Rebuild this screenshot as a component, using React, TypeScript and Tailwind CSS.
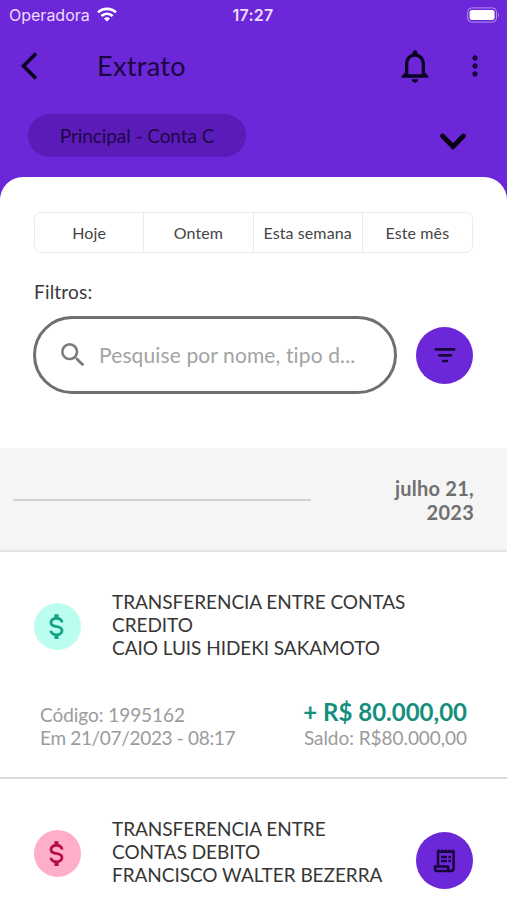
import type { ReactNode } from "react";
import clsx from "clsx";
import { MdMoreVert, MdNotificationsNone, MdSearch } from "react-icons/md";

interface Transaction {
  lines: string[];
  kind: "credit" | "debit";
  code?: string;
  date?: string;
  amount?: string;
  balance?: string;
}

const PERIODS = ["Hoje", "Ontem", "Esta semana", "Este mês"];

const TRANSACTIONS: Transaction[] = [
  {
    lines: ["TRANSFERENCIA ENTRE CONTAS", "CREDITO", "CAIO LUIS HIDEKI SAKAMOTO"],
    kind: "credit",
    code: "1995162",
    date: "21/07/2023 - 08:17",
    amount: "+ R$ 80.000,00",
    balance: "R$80.000,00",
  },
  {
    lines: ["TRANSFERENCIA ENTRE", "CONTAS DEBITO", "FRANCISCO WALTER BEZERRA"],
    kind: "debit",
  },
];

function StatusBar() {
  return (
    <div className="grid h-[29px] grid-cols-3 items-center pl-[9px] pr-[10px] font-['Inter'] text-[#eedcff]">
      <div className="flex items-center gap-[7px]">
        <span className="text-[16px] leading-none">Operadora</span>
        <svg className="h-[15px] w-5" viewBox="0 0 20 15" fill="none" stroke="white" strokeWidth="2.7">
          <path d="M1 5.4C6 .6 14 .6 19 5.4" />
          <path d="M4.4 9C7.6 6 12.4 6 15.6 9" />
          <path d="M10 14.6 6.9 11.5C8.6 9.9 11.4 9.9 13.1 11.5Z" fill="white" stroke="none" />
        </svg>
      </div>
      <span className="text-center text-[16px] font-semibold leading-none tracking-[0.3px]">17:27</span>
      <svg className="-mr-[3px] h-4 w-[33px] justify-self-end" viewBox="0 0 33 16">
        <rect x="0.7" y="0.9" width="28.8" height="14.2" rx="4" fill="none" stroke="#b292ee" strokeWidth="1" />
        <rect x="2.6" y="2.9" width="25" height="10.2" rx="2.4" fill="white" />
        <path d="M31 5.8c1.3.6 1.3 3.8 0 4.4Z" fill="#b292ee" />
      </svg>
    </div>
  );
}

function Header() {
  return (
    <header className="h-[200px] text-[#1a0640]">
      <StatusBar />
      <div className="flex h-[73px] items-center pl-[20px] pr-[16px]">
        <svg className="h-7 w-5" viewBox="0 0 20 28" fill="none" stroke="#0c0320" strokeWidth="3.6">
          <path d="M16 1.5 3.5 14 16 26.5" />
        </svg>
        <h1 className="ml-[57px] text-[27px] leading-none tracking-[0.35px]">Extrato</h1>
        <MdNotificationsNone className="ml-auto size-10 text-[#0c0320]" />
        <MdMoreVert className="ml-[24px] size-8 text-[#1b0640]" />
      </div>
      <div className="flex items-start pl-[28px] pr-[39px] pt-[12px]">
        <div className="flex h-[43px] w-[218px] items-center justify-center rounded-full bg-[#5a1bb8] pt-px text-[19px] -tracking-[0.07px] text-[#1f0747]">
          Principal - Conta C
        </div>
        <svg
          className="ml-auto mt-[17px] h-5 w-[30px]"
          viewBox="0 0 30 20"
          fill="none"
          stroke="#080213"
          strokeWidth="4.8"
          strokeLinecap="round"
        >
          <path d="m4.5 5 10.500 10.500L25.500 5" />
        </svg>
      </div>
    </header>
  );
}

function RoundButton({ className, children }: { className?: string; children: ReactNode }) {
  return (
    <button
      type="button"
      className={clsx(
        "flex size-[57px] shrink-0 items-center justify-center rounded-full bg-[#6c27d9] text-[#18053a]",
        className
      )}
    >
      {children}
    </button>
  );
}

function FilterIcon() {
  return (
    <svg className="h-4 w-[22px]" viewBox="0 0 22 16" stroke="currentColor" strokeWidth="2.7" strokeLinecap="round">
      <path d="M1.9 2.300h18.200M5.300 8.300h11.600M9.300 14h3.600" />
    </svg>
  );
}

function ReceiptIcon() {
  return (
    <svg className="h-6 w-[23px]" viewBox="0 0 23 24" fill="none" stroke="currentColor" strokeWidth="2.500">
      <path d="M5 16.500V2.800h15.600v16.400a2.800 2.800 0 0 1-2.800 2.800" />
      <path d="M17.800 22H4.300a2.300 2.300 0 0 1-2.300-2.300v-2.300h13.200v2.200a2.500 2.500 0 0 0 2.600 2.400Z" strokeLinejoin="round" />
      <path d="M4.800 1.200h16" strokeWidth="1.600" strokeDasharray="1.900 1.600" />
      <path d="M8 8h6M15.500 8h2.500M8 12h6M15.500 12h2.500" strokeWidth="2.300" />
    </svg>
  );
}

function Filters() {
  return (
    <div className="h-[271px] px-[34px] pt-[35px]">
      <div className="grid h-[41px] grid-cols-4 divide-x divide-[#ebebeb] rounded-[7px] border border-[#ebebeb]">
        {PERIODS.map((period) => (
          <button key={period} type="button" className="whitespace-nowrap text-[16px] tracking-[0.1px] text-[#444]">
            {period}
          </button>
        ))}
      </div>
      <p className="mt-[27px] text-[19px] leading-6 tracking-[0.2px] text-[#3a3a3a]">Filtros:</p>
      <div className="-ml-px mt-[12px] flex items-center justify-between">
        <div className="flex h-[78px] w-[364px] items-center rounded-full border-3 border-[#6f6f6f] pl-[21px]">
          <MdSearch className="size-8 text-[#7d7d7d]" />
          <span className="ml-[10px] whitespace-nowrap text-[21px] tracking-[0.12px] text-[#a3a3a3]">
            Pesquise por nome, tipo d...
          </span>
        </div>
        <RoundButton>
          <FilterIcon />
        </RoundButton>
      </div>
    </div>
  );
}

function DateDivider() {
  return (
    <div className="flex h-[104px] items-center border-b-2 border-[#e4e4e4] bg-[#f5f5f5] pl-[13px] pr-[33px] pt-px">
      <div className="h-[2px] w-[298px] bg-[#d2d2d2]" />
      <p className="ml-auto w-[90px] pt-px text-right text-[20px] font-bold leading-6 tracking-[0.25px] text-[#707070]">
        julho 21, 2023
      </p>
    </div>
  );
}

function KindIcon({ kind }: { kind: Transaction["kind"] }) {
  return (
    <div
      className={clsx(
        "mt-[13px] flex size-[47px] items-center justify-center rounded-full",
        kind === "credit" ? "bg-[#bbfdef] text-[#12a387]" : "bg-[#ffaec8] text-[#b60b45]"
      )}
    >
      <svg className="-ml-0.5 size-[33px]" viewBox="0 0 24 24" fill="currentColor">
        <path d="M7 15h2c0 1.080 1.370 2 3 2s3-.92 3-2c0-1.100-1.040-1.500-3.240-2.030C9.640 12.440 7 11.780 7 9c0-1.790 1.470-3.310 3.500-3.820V3h3v2.180C15.530 5.690 17 7.210 17 9h-2c0-1.080-1.370-2-3-2s-3 .92-3 2c0 1.100 1.040 1.500 3.240 2.030C14.360 11.560 17 12.220 17 15c0 1.790-1.470 3.310-3.500 3.820V21h-3v-2.180C8.470 18.310 7 16.790 7 15Z" />
      </svg>
    </div>
  );
}

function TransactionRow({ transaction }: { transaction: Transaction }) {
  return (
    <article className="h-[227px] border-b-2 border-[#dadada] px-[34px] pt-[38px]">
      <div className="flex items-start">
        <KindIcon kind={transaction.kind} />
        <div className="ml-[31px] flex-1 whitespace-nowrap text-[19px] leading-[23px] -tracking-[0.05px] text-[#363636]">
          {transaction.lines.map((line) => (
            <p key={line}>{line}</p>
          ))}
        </div>
        {transaction.kind === "debit" && (
          <RoundButton className="mt-[15px]">
            <ReceiptIcon />
          </RoundButton>
        )}
      </div>
      {transaction.amount && (
        <div className="mt-[38px] flex items-end justify-between px-[6px] text-[19px] leading-[23px] text-[#9b9b9b]">
          <div>
            <p className="-tracking-[0.05px]">Código: {transaction.code}</p>
            <p className="-tracking-[0.33px]">Em {transaction.date}</p>
          </div>
          <div className="text-right">
            <p className="text-[24px] font-bold leading-[29px] text-[#158f7c]">{transaction.amount}</p>
            <p className="-tracking-[0.05px]">Saldo: {transaction.balance}</p>
          </div>
        </div>
      )}
    </article>
  );
}

export default function App() {
  return (
    <div className="h-[900px] w-[507px] overflow-hidden bg-[#6c27d9] font-['Lato',sans-serif]">
      <Header />
      <main className="-mt-[23px] h-[723px] overflow-hidden rounded-t-[23px] bg-white">
        <Filters />
        <DateDivider />
        {TRANSACTIONS.map((transaction) => (
          <TransactionRow key={transaction.lines[2]} transaction={transaction} />
        ))}
      </main>
    </div>
  );
}
